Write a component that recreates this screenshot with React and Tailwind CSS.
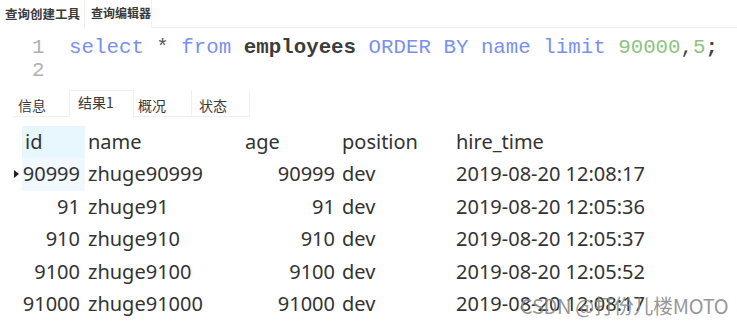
const rows = [
    { id: '90999', name: 'zhuge90999', age: '90999', position: 'dev', hire: '2019-08-20 12:08:17', current: true },
    { id: '91', name: 'zhuge91', age: '91', position: 'dev', hire: '2019-08-20 12:05:36' },
    { id: '910', name: 'zhuge910', age: '910', position: 'dev', hire: '2019-08-20 12:05:37' },
    { id: '9100', name: 'zhuge9100', age: '9100', position: 'dev', hire: '2019-08-20 12:05:52' },
    { id: '91000', name: 'zhuge91000', age: '91000', position: 'dev', hire: '2019-08-20 12:08:17' },
];

const cjk = { fontFamily: '"Noto Sans CJK SC", "Noto Sans", sans-serif' };

export default function App() {
    return (
        <div className="relative w-[737px] h-[327px] overflow-hidden bg-white text-[#333]" style={{ fontFamily: '"Noto Sans", "Noto Sans CJK SC", sans-serif' }}>
            {/* top tabs */}
            <div className="flex h-[28px] items-stretch" style={cjk}>
                <div className="pl-[5px] pr-[4px] flex items-center text-[12.5px] font-bold text-[#3a3a3a] border-r border-[#eeeeee]">查询创建工具</div>
                <div className="w-[66px] pl-[6px] flex items-center text-[12px] font-bold text-[#3a3a3a] -mt-[3px]">查询编辑器</div>
                <div className="flex-1 border-b border-l border-[#f0f0f0]" />
            </div>

            {/* editor */}
            <div className="pt-[8px] text-[20.8px] leading-[23px]" style={{ fontFamily: '"Liberation Mono", monospace' }}>
                <div className="flex">
                    <span className="w-[69px] pl-[32px] text-[#b0b0b0]">1</span>
                    <span>
                        <span className="text-[#7a90ef]">select</span>
                        <span className="text-[#555]"> * </span>
                        <span className="text-[#7a90ef]">from</span>
                        <span className="text-[#3c3c3c] font-bold"> employees </span>
                        <span className="text-[#7a90ef]">ORDER BY name limit </span>
                        <span className="text-[#8cc47f]">90000</span>
                        <span className="text-[#444]">,</span>
                        <span className="text-[#8cc47f]">5</span>
                        <span className="text-[#444] font-bold">;</span>
                    </span>
                </div>
                <div className="flex">
                    <span className="w-[69px] pl-[32px] text-[#b0b0b0]">2</span>
                </div>
            </div>

            {/* result tabs */}
            <div className="mt-[8px] ml-[12px] flex h-[27px] text-[14px] text-[#3a3a3a]" style={cjk}>
                <div className="w-[58px] pl-[6px] pt-[4px] flex items-center border-r border-b border-[#f0f0f0]">信息</div>
                <div className="w-[63px] pl-[8px] flex items-start pt-[1px] border-t border-[#f0f0f0]">结果1</div>
                <div className="w-[59px] pl-[4px] pt-[4px] flex items-center border-l border-r border-b border-[#f0f0f0]">概况</div>
                <div className="w-[58px] pl-[7px] pt-[4px] flex items-center border-r border-b border-[#f0f0f0]">状态</div>
            </div>

            {/* result grid */}
            <div className="mt-[9px] grid grid-cols-[22px_63px_155px_97px_116px_1fr] text-[20px] text-[#333]">
                <div className="h-[32px]" />
                <div className="h-[32px] pl-[3px] flex items-center bg-[#e8f6fe]">id</div>
                <div className="h-[32px] pl-[3px] flex items-center">name</div>
                <div className="h-[32px] pl-[5px] flex items-center">age</div>
                <div className="h-[32px] pl-[5px] flex items-center">position</div>
                <div className="h-[32px] pl-[3px] flex items-center">hire_time</div>

                {rows.map((r) => (
                    <div key={r.id} className="contents">
                        <div className="h-[32.5px] flex items-center justify-end pr-[3px]">
                            {r.current && <span className="block w-0 h-0 border-y-[4px] border-y-transparent border-l-[5px] border-l-[#222]" />}
                        </div>
                        <div className={`h-[32.5px] pr-[5px] flex items-center justify-end ${r.current ? 'bg-[#f1f9fe]' : ''}`}>{r.id}</div>
                        <div className="h-[32.5px] pl-[3px] flex items-center">{r.name}</div>
                        <div className="h-[32.5px] pr-[2px] flex items-center justify-end">{r.age}</div>
                        <div className="h-[32.5px] pl-[5px] flex items-center">{r.position}</div>
                        <div className="h-[32.5px] pl-[3px] flex items-center">{r.hire}</div>
                    </div>
                ))}
            </div>

            {/* watermark */}
            <div className="absolute left-[520px] top-[291px] text-[20px] text-[#8a8a8a]/90 tracking-[-0.3px]" style={cjk}>
                CSDN @打份儿楼MOTO
            </div>
        </div>
    );
}
